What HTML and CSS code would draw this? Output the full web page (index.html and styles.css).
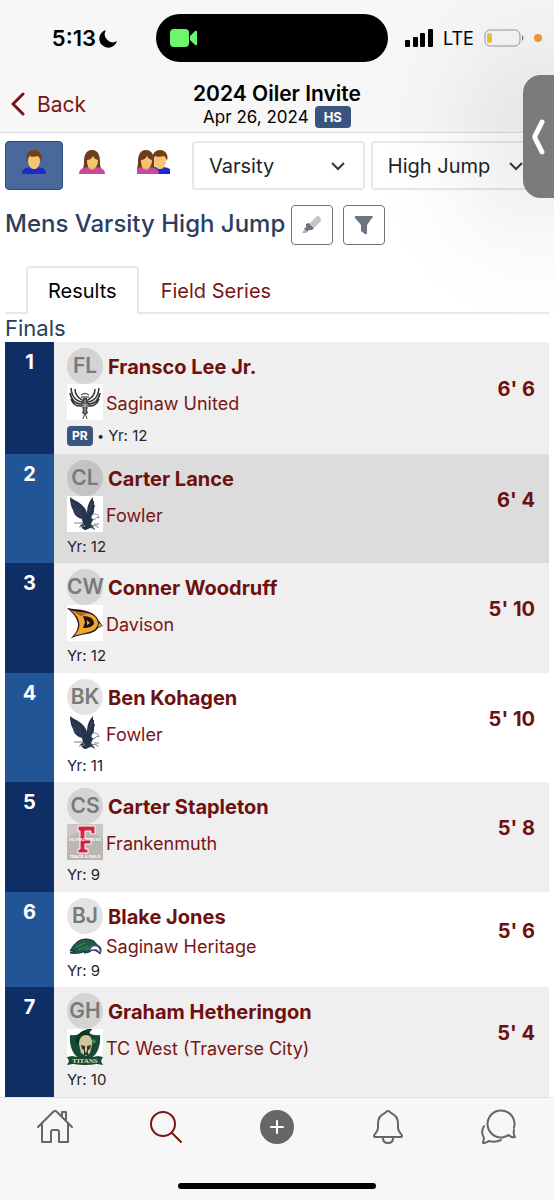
FILE: index.html
```html
<!DOCTYPE html>
<html lang="en">
<head>
    <meta charset="UTF-8">
    <meta name="viewport" content="width=device-width, initial-scale=1.0">
    <title>2024 Oiler Invite - High Jump</title>
    <link rel="stylesheet" href="styles.css">
</head>
<body>
    <!-- shared drawings -->
    <svg class="defs" aria-hidden="true">
        <symbol id="man" viewBox="0 0 26 26">
            <path d="M1 25c0-5 3-6 8-7h8c5 1 8 2 8 7z" fill="#1a2bd0"/>
            <path d="M9 17h8c0 4-8 4-8 0z" fill="#e3ad5c"/>
            <ellipse cx="13" cy="12" rx="6" ry="8" fill="#f6c56f"/>
            <path d="M6 12C4 5 8 1 13 1s9 4 7 11c-1-3-2-4-3-5-3 1-7 1-9 0-1 2-1 3-2 5z" fill="#7a3c13"/>
        </symbol>
        <symbol id="woman" viewBox="0 0 26 26">
            <path d="M13 1C6 1 5 8 5 13c0 5-1 6-2 8h20c-1-2-2-3-2-8 0-5-1-12-8-12z" fill="#6f3d1c"/>
            <path d="M0 25c0-5 4-6 9-7h8c5 1 9 2 9 7z" fill="#c9489f"/>
            <path d="M9 17h8c0 5-8 5-8 0z" fill="#e3ad5c"/>
            <path d="M8 11c3 0 5-2 6-4 1 2 2 3 5 4 0 5-2 8-6 8s-5-3-5-8z" fill="#f6c56f"/>
        </symbol>
        <symbol id="eagle" viewBox="0 0 36 36">
            <path d="M15 23C8 21 7 17 6 14 4 11 3 6 3 1c3 3 8 4 12 8 3 3 5 6 5 9 0-6 1-12 6-17l0 4 1 0 0 4 1 0-1 4 0 3-2 4c2 0 3 1 4 2l-3 2-2 4 4 5-5-1-4 2c-3 0-4-2-6-5l3-1z" fill="#26334d"/>
            <path d="M5 7l9 7M6 12l8 5M8 16l8 4M25 6l-3 10" stroke="#56637d" stroke-width=".5" fill="none"/>
            <path d="M25 19c2-2 7-1 7 3l-2-1-3 3-3-2z" fill="#fff" stroke="#59647c" stroke-width=".7"/>
            <path d="M7 27h8l3 3-6 1M24 29l6 1 1 2M24 31l4 3M27 28l5 0" stroke="#7b8188" fill="none"/>
        </symbol>
    </svg>

    <div class="app">
        <div class="status-bar">
            <div class="time">
                5:13
                <svg width="19" height="19" viewBox="0 0 19 19"><path d="M7 1A9 9 0 1 0 18 12A8 8 0 0 1 7 1z"/></svg>
            </div>
            <div class="island">
                <svg width="28" height="18" viewBox="0 0 28 18" fill="#6df56b"><rect width="19" height="18" rx="4"/><path d="M20 7l5-5q2-1 2 1v12q0 2-2 1l-5-5z"/></svg>
            </div>
            <div class="signals">
                <svg width="28" height="18" viewBox="0 0 28 18"><rect y="11" width="5" height="7" rx="1"/><rect x="8" y="8" width="5" height="10" rx="1"/><rect x="15" y="4" width="5" height="14" rx="1"/><rect x="23" width="5" height="18" rx="1"/></svg>
                <span>LTE</span>
                <svg width="40" height="18" viewBox="0 0 40 18"><rect x="1" y="1" width="35" height="16" rx="5" fill="none" stroke="#999"/><rect x="3" y="4" width="5" height="10" rx="2" fill="#e9c33b"/><path d="M38 6q3 3 0 6z" fill="#777"/></svg>
                <i class="mic-dot"></i>
            </div>
        </div>

        <header class="nav">
            <a class="back" href="#">
                <svg width="14" height="24" viewBox="0 0 14 24"><path d="M12 2L2 12L12 22" fill="none" stroke="currentColor" stroke-width="3" stroke-linecap="round"/></svg>
                Back
            </a>
            <div class="meet">
                <h1>2024 Oiler Invite</h1>
                <p>Apr 26, 2024 <span class="badge">HS</span></p>
            </div>
        </header>

        <main>
            <div class="filters">
                <div class="genders">
                    <button type="button" class="active" aria-label="Mens"><svg width="26" height="26"><use href="#man"/></svg></button>
                    <button type="button" aria-label="Womens"><svg width="26" height="26"><use href="#woman"/></svg></button>
                    <button type="button" class="both" aria-label="Both"><svg width="33" height="26"><use href="#man" x="10" width="26" height="26"/><use href="#woman" x="-4" width="26" height="26"/></svg></button>
                </div>
                <div class="select">
                    <select aria-label="Division"><option>Varsity</option></select>
                    <svg width="16" height="10" viewBox="0 0 16 10"><path d="M2 2l6 6 6-6"/></svg>
                </div>
                <div class="select event-select">
                    <select aria-label="Event"><option>High Jump</option></select>
                    <svg width="16" height="10" viewBox="0 0 16 10"><path d="M2 2l6 6 6-6"/></svg>
                </div>
            </div>

            <div class="event">
                <h2>Mens Varsity High Jump</h2>
                <button type="button" aria-label="Highlight">
                    <svg width="20" height="20" viewBox="0 0 20 20"><path d="M8 8l6-6q2-2 4 0 2 3 0 5l-6 6z" fill="#c2c5c8"/><path d="M7 8l5 5-2 2H7l-2 2-3-3 2-2V9z" fill="#6c757d"/><path d="M2 15l3 2-1 1H0z" fill="#aeb2b6"/></svg>
                </button>
                <button type="button" aria-label="Filter">
                    <svg width="20" height="20" viewBox="0 0 20 20"><path d="M2 1h16q2 1 0 2l-5 7v8q0 2-2 1l-4-3v-6L1 3Q0 1 2 1z" fill="#6c757d"/></svg>
                </button>
            </div>

            <nav class="tabs">
                <a href="#" class="active">Results</a>
                <a href="#">Field Series</a>
            </nav>

            <h3>Finals</h3>
            <table class="results">
                <tr>
                    <th scope="row">1</th>
                    <td>
                        <div class="athlete"><span class="avatar">FL</span><a href="#">Fransco Lee Jr.</a></div>
                        <div class="team">
                            <svg class="logo" viewBox="0 0 36 36">
                                <rect width="36" height="36" fill="#fff"/>
                                <g fill="none" stroke="#333" stroke-width="1.5">
                                    <path d="M16 18Q5 17 4 4M15 20Q5 20 3 9M15 22Q7 23 4 15M8 5q0 7 7 11M20 18Q31 17 32 4M21 20Q31 20 33 9M21 22Q29 23 32 15M28 5q0 7-7 11"/>
                                    <path d="M14 11q4-3 8 0M14 13h8" stroke="#666"/>
                                </g>
                                <path d="M16 14h4l2 6-2 6 1 3-3 2-3-2 1-3-2-6z" fill="#444"/>
                                <path d="M18 16v14M15 20l6 3M21 20l-6 3" stroke="#bbb"/>
                                <path d="M18 29l-2 6M18 29l2 6" stroke="#444"/>
                            </svg>
                            <a href="#">Saginaw United</a>
                        </div>
                        <div class="meta has-badge"><span class="badge small">PR</span> <b>•</b> Yr: 12</div>
                    </td>
                    <td class="mark"><a href="#">6' 6</a></td>
                </tr>
                <tr class="hover">
                    <th scope="row">2</th>
                    <td>
                        <div class="athlete"><span class="avatar">CL</span><a href="#">Carter Lance</a></div>
                        <div class="team">
                            <svg class="logo white" viewBox="0 0 36 36"><use href="#eagle"/></svg>
                            <a href="#">Fowler</a>
                        </div>
                        <div class="meta">Yr: 12</div>
                    </td>
                    <td class="mark"><a href="#">6' 4</a></td>
                </tr>
                <tr>
                    <th scope="row">3</th>
                    <td>
                        <div class="athlete"><span class="avatar">CW</span><a href="#">Conner Woodruff</a></div>
                        <div class="team">
                            <svg class="logo white" viewBox="0 0 36 36">
                                <path d="M0 3C12 5 27 4 32 16l4 5-5 2C26 31 12 28 3 34c6-6 8-9 8-15C10 11 4 7 0 3z" fill="#30191b"/>
                                <path d="M3 5c9 4 26 0 28 13-1 10-13 9-24 13 5-5 6-10 5-14C11 11 7 8 3 5z" fill="#f0a72f"/>
                                <path d="M3 5c5 3 11 3 17 4l-6 2z" fill="#b9502c"/>
                                <path d="M16 11c7 0 11 3 11 7 0 3-5 5-11 5l2-6z" fill="#211617"/>
                                <path d="M20 15l3 3-3 2z" fill="#f0a72f"/>
                                <path d="M32 18l4 3-5 1z" fill="#c4a062"/>
                            </svg>
                            <a href="#">Davison</a>
                        </div>
                        <div class="meta">Yr: 12</div>
                    </td>
                    <td class="mark"><a href="#">5' 10</a></td>
                </tr>
                <tr>
                    <th scope="row">4</th>
                    <td>
                        <div class="athlete"><span class="avatar">BK</span><a href="#">Ben Kohagen</a></div>
                        <div class="team">
                            <svg class="logo white" viewBox="0 0 36 36"><use href="#eagle"/></svg>
                            <a href="#">Fowler</a>
                        </div>
                        <div class="meta">Yr: 11</div>
                    </td>
                    <td class="mark"><a href="#">5' 10</a></td>
                </tr>
                <tr>
                    <th scope="row">5</th>
                    <td>
                        <div class="athlete"><span class="avatar">CS</span><a href="#">Carter Stapleton</a></div>
                        <div class="team">
                            <svg class="logo" viewBox="0 0 36 36">
                                <rect width="36" height="36" fill="#b9b7b1"/>
                                <path d="M0 14Q18 2 36 14V0H0z" fill="#c9c8c3"/>
                                <path d="M11 2h17v8h-4V7h-6v8h6v5h-6v5h3v4H11v-4h2V7h-2z" fill="#d32344" stroke="#fff" stroke-width="1"/>
                                <text x="18" y="17" text-anchor="middle" class="logo-word">FRANKENMUTH</text>
                                <text x="18" y="34" text-anchor="middle" class="logo-line">TRACK &amp; FIELD</text>
                            </svg>
                            <a href="#">Frankenmuth</a>
                        </div>
                        <div class="meta">Yr: 9</div>
                    </td>
                    <td class="mark"><a href="#">5' 8</a></td>
                </tr>
                <tr>
                    <th scope="row">6</th>
                    <td>
                        <div class="athlete"><span class="avatar">BJ</span><a href="#">Blake Jones</a></div>
                        <div class="team">
                            <svg class="logo wide" viewBox="0 0 36 22">
                                <path d="M3 17C7 10 10 6 18 5c7 0 10 2 12 6 4 1 5 5 3 9-3-3-5-4-8-4-1 2-5 3-8 3l2-2c-4 2-10 3-16 2l5-2z" fill="#205b43" stroke="#25234f"/>
                                <path d="M9 13l9-4M11 16l10-4M18 16l8-4" stroke="#449071"/>
                                <path d="M26 12c5-1 8 3 7 7-2-3-4-4-7-3l-4 0z" fill="#fff" stroke="#4e4287"/>
                            </svg>
                            <a href="#">Saginaw Heritage</a>
                        </div>
                        <div class="meta">Yr: 9</div>
                    </td>
                    <td class="mark"><a href="#">5' 6</a></td>
                </tr>
                <tr>
                    <th scope="row">7</th>
                    <td>
                        <div class="athlete"><span class="avatar">GH</span><a href="#">Graham Hetheringon</a></div>
                        <div class="team">
                            <svg class="logo white" viewBox="0 0 36 36">
                                <path d="M3 6q8 1 15-4 7 5 15 4c1 12-3 22-15 27C6 28 2 18 3 6z" fill="#174b34"/>
                                <path d="M9 13C10 4 16 1 25 0c-2 2-3 3-3 5-6 0-9 3-10 9z" fill="#103825" stroke="#092b1c"/>
                                <path d="M12 15c0-6 3-9 7-9s7 4 6 10l-2 8-4 3-5-3z" fill="#cfc49c"/>
                                <path d="M14 16l4 1v5l1 2 1-2v-5l4-1-1 4-2 1v5h-4v-5l-2-1z" fill="#34352b"/>
                                <path d="M27 10l1 2 2 0-2 1-1 2-1-2-1-1z" fill="#4b9c72"/>
                                <path d="M0 28l5-1q13 3 26 0l5 1-2 4 2 4-6-1q-12 2-24 0l-6 1 2-4z" fill="#174b34"/>
                                <text x="18" y="34" text-anchor="middle" class="logo-titans">TITANS</text>
                            </svg>
                            <a href="#">TC West (Traverse City)</a>
                        </div>
                        <div class="meta">Yr: 10</div>
                    </td>
                    <td class="mark"><a href="#">5' 4</a></td>
                </tr>
            </table>
        </main>

        <footer>
            <nav class="tab-bar">
                <a href="#" aria-label="Home"><svg width="38" height="38" viewBox="0 0 38 38"><path d="M2 19L17 4q2-2 4 0l15 15M6 16v18h9V24q0-2 2-2h4q2 0 2 2v10h9V16M26 8V4h4v9"/></svg></a>
                <a href="#" class="current" aria-label="Search"><svg width="38" height="38" viewBox="0 0 38 38"><circle cx="16" cy="16" r="12"/><path d="M25 25l9 9"/></svg></a>
                <a href="#" aria-label="Add"><svg width="38" height="38" viewBox="0 0 38 38"><circle cx="19" cy="19" r="16" fill="#666" stroke="#666"/><path d="M19 13v12M13 19h12" stroke="#fff"/></svg></a>
                <a href="#" aria-label="Notifications"><svg width="38" height="38" viewBox="0 0 38 38"><path d="M16 5q3-4 6 0c5 2 7 6 7 11v4c0 4 4 6 4 8 0 1-1 1-2 1H7c-1 0-2 0-2-1 0-2 4-4 4-8v-4c0-5 2-9 7-11zM14 30q0 5 5 5t5-5"/></svg></a>
                <a href="#" aria-label="Messages"><svg width="38" height="38" viewBox="0 0 38 38"><circle cx="21" cy="16" r="13.500" stroke-dasharray="70 15" transform="rotate(78 21 16)"/><path d="M24 29q3-1 5-2 2 3 6 2-2-3-1-7M4 18c-3 5-2 8 0 12 0 2-1 3-1 5 3 0 4-1 6-2 4 1 8 1 12-1"/></svg></a>
            </nav>
            <div class="home-indicator"></div>
        </footer>

        <button type="button" class="side-handle" aria-label="Open panel">
            <svg width="13" height="36" viewBox="0 0 13 36"><path d="M10 3L3 17v2l7 14" fill="none" stroke="#fff" stroke-width="5" stroke-linecap="round" stroke-linejoin="round"/></svg>
        </button>
    </div>
</body>
</html>
```
FILE: styles.css
```css
* {
    box-sizing: border-box;
}
body {
    margin: 0;
    font-family: Inter, "Liberation Sans", sans-serif;
    font-size: 18px;
    color: #212529;
    background: #fff;
}
h1, h2, h3, p {
    margin: 0;
}
a {
    color: #7a1515;
    text-decoration: none;
}
button {
    padding: 0;
    font: inherit;
    cursor: pointer;
}
svg {
    display: block;
    flex: none;
}
.defs {
    position: absolute;
    width: 0;
    height: 0;
}
.app {
    position: relative;
    display: flex;
    flex-direction: column;
    min-height: 100vh;
    overflow: hidden;
}

/* status bar */
.status-bar {
    display: grid;
    grid-template-columns: minmax(0, 1fr) 232px minmax(0, 1fr);
    align-items: center;
    height: 76px;
    padding-right: 10px;
    background: #f7f7f7;
    color: #000;
}
.time {
    display: flex;
    align-items: center;
    justify-content: flex-end;
    gap: 3px;
    padding-right: 38px;
    font-size: 22px;
    font-weight: 600;
}
.island {
    display: flex;
    align-items: center;
    height: 48px;
    padding-left: 14px;
    border-radius: 24px;
    background: #000;
}
.signals {
    display: flex;
    align-items: center;
    gap: 10px;
    padding-left: 17px;
    font-size: 18px;
}
.mic-dot {
    flex: none;
    width: 8px;
    height: 8px;
    border-radius: 50%;
    background: #f19a38;
}

/* header */
.nav {
    display: grid;
    grid-template-columns: 1fr auto 1fr;
    align-items: center;
    height: 57px;
    border-bottom: 1px solid #ddd;
    background: #f7f7f7;
    color: #000;
}
.back {
    display: flex;
    align-items: center;
    gap: 12px;
    padding-left: 11px;
    font-size: 21px;
}
.meet {
    padding-top: 2px;
    text-align: center;
}
.meet h1 {
    font-size: 21px;
    line-height: 24px;
    font-weight: 600;
}
.meet p {
    display: flex;
    align-items: center;
    justify-content: center;
    gap: 6px;
    font-size: 17px;
    line-height: 22px;
}
.badge {
    padding: 0 9px;
    border-radius: 4px;
    background: #3a5480;
    color: #fff;
    font-size: 13px;
    line-height: 22px;
    font-weight: 700;
}
.badge.small {
    padding: 0 5px;
    font-size: 12px;
    line-height: 20px;
}

/* filters */
main {
    flex: 1;
    padding: 8px 5px 0;
}
.filters {
    display: flex;
    gap: 6px;
}
.genders {
    display: flex;
    width: 181px;
}
.genders button {
    display: flex;
    justify-content: center;
    width: 58px;
    height: 49px;
    padding-top: 7px;
    border: 1px solid transparent;
    border-radius: 4px;
    background: none;
}
.genders .both {
    width: 65px;
}
.genders .active {
    border-color: #2d4a78;
    background: #48699a;
}
.select {
    position: relative;
    flex: 32;
}
.event-select {
    flex: 33;
}
.select select {
    width: 100%;
    height: 49px;
    padding: 0 15px;
    border: 2px solid #e5e8ec;
    border-radius: 4px;
    appearance: none;
    background: #fff;
    color: #212529;
    font: inherit;
    font-size: 20px;
}
.select svg {
    position: absolute;
    right: 19px;
    top: 20px;
    fill: none;
    stroke: #343a40;
    stroke-width: 2;
    pointer-events: none;
}
.event-select svg {
    right: 25px;
}
.event {
    display: flex;
    align-items: center;
    gap: 10px;
    margin-top: 15px;
}
.event h2 {
    margin-right: -4px;
    padding-bottom: 3px;
    color: #2b3e5f;
    font-size: 24px;
    line-height: 36px;
    font-weight: 500;
    white-space: nowrap;
}
.event button {
    display: grid;
    place-items: center;
    width: 42px;
    height: 40px;
    border: 1px solid #6c757d;
    border-radius: 4px;
    background: transparent;
}

/* tabs */
.tabs {
    display: flex;
    margin-top: 21px;
    padding-left: 21px;
    border-bottom: 2px solid #e5e8ec;
    font-size: 20px;
    line-height: 46px;
}
.tabs a {
    margin-bottom: -2px;
    padding: 0 20px;
    border: 2px solid transparent;
    border-bottom: 0;
    border-radius: 4px 4px 0 0;
}
.tabs .active {
    border-color: #e5e8ec;
    background: #fff;
    color: #000;
}
h3 {
    color: #2b3e5f;
    font-size: 22px;
    line-height: 28px;
    font-weight: 400;
}

/* results */
.results {
    width: 100%;
    border-collapse: collapse;
}
.results tr {
    background: #fff;
}
.results tr:nth-child(odd) {
    background: #efefef;
}
.results tr.hover {
    background: #dcdcdc;
}
.results th {
    width: 49px;
    padding: 8px 0 0;
    background: #225596;
    color: #fff;
    font-size: 20px;
    line-height: 24px;
    vertical-align: top;
}
.results tr:nth-child(odd) th {
    background: #102e66;
}
.results td {
    padding: 6px 0 6px 13px;
}
.athlete, .team {
    display: flex;
    align-items: center;
}
.athlete {
    gap: 5px;
    font-size: 20px;
    font-weight: 700;
}
.athlete a {
    padding-top: 2px;
}
.athlete a, .mark a {
    color: #6e1010;
}
.avatar {
    width: 36px;
    height: 36px;
    border-radius: 50%;
    background: rgba(0, 0, 0, 0.11);
    color: #7a7a7a;
    font-size: 21px;
    line-height: 36px;
    font-weight: 600;
    text-align: center;
}
.team {
    gap: 3px;
}
.team a {
    padding-top: 4px;
    line-height: 18px;
}
.logo {
    width: 36px;
    height: 36px;
}
.logo.white {
    background: #fff;
}
.logo.wide {
    height: 22px;
}
.logo-word {
    fill: #fff;
    font: 700 4px "Liberation Serif", serif;
}
.logo-line {
    fill: #fff;
    font: 700 4px "Liberation Sans", sans-serif;
}
.logo-titans {
    fill: #e4dcb8;
    font: 700 7px "Liberation Serif", serif;
}
.meta {
    padding-top: 4px;
    font-size: 15px;
    line-height: 21px;
}
.results tr:nth-child(odd) .meta {
    line-height: 22px;
}
.results .has-badge {
    display: flex;
    align-items: center;
    gap: 5px;
    height: 28px;
}
.meta b {
    font-size: 12px;
}
.results .mark {
    padding: 0 14px 18px 0;
    font-size: 20px;
    font-weight: 700;
    text-align: right;
    white-space: nowrap;
}

/* bottom bar */
footer {
    height: 103px;
    border-top: 1px solid #e2e2e2;
    background: #f7f7f7;
}
.tab-bar {
    display: flex;
    padding-top: 10px;
}
.tab-bar a {
    display: flex;
    flex: 1;
    justify-content: center;
    color: #666;
}
.tab-bar .current {
    color: #7a1515;
}
.tab-bar svg {
    fill: none;
    stroke: currentColor;
    stroke-width: 2;
    stroke-linecap: round;
    stroke-linejoin: round;
}
.home-indicator {
    width: 198px;
    height: 6px;
    margin: 37px auto 0;
    border-radius: 3px;
    background: #000;
}

/* handle floating on the right edge */
.side-handle {
    position: absolute;
    top: 75px;
    right: 0;
    display: flex;
    align-items: center;
    width: 31px;
    height: 123px;
    padding-left: 9px;
    border: 0;
    border-radius: 18px 0 0 18px;
    background: #7b7b7b;
    box-shadow: 0 0 130px 10px rgba(0, 0, 0, 0.3);
}
```
